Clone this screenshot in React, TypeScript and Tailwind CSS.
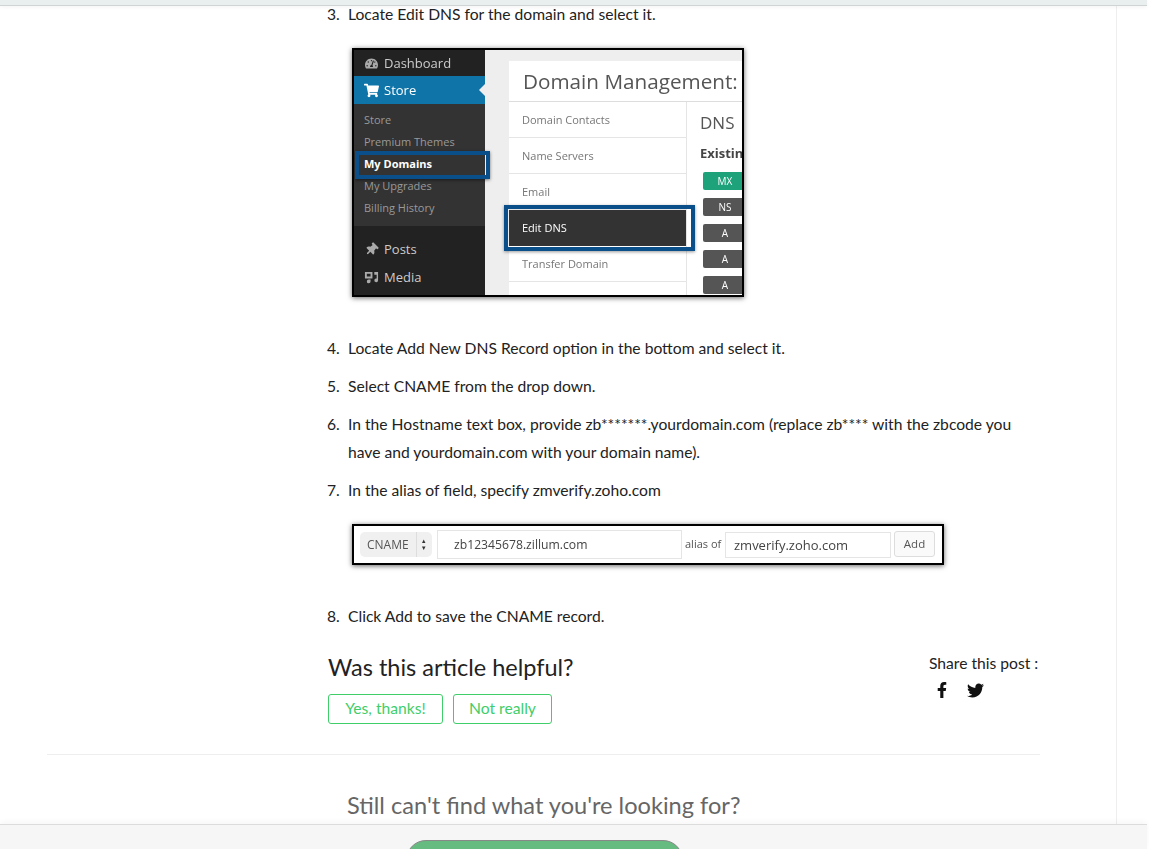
import { FaFacebookF, FaTwitter, FaShoppingCart, FaThumbtack, FaTachometerAlt } from "react-icons/fa"

const ui = "font-['Open_Sans',sans-serif]"

function Step({ n, children }: { n: number; children: React.ReactNode }) {
  return (
    <li className="flex leading-[28px] mb-[10px]">
      <span className="w-[21px] shrink-0">{n}.</span>
      <div className="min-w-0 flex-1">{children}</div>
    </li>
  )
}

function SubItem({ label, strong }: { label: string; strong?: boolean }) {
  return (
    <div className={`h-[22px] leading-[22px] pl-[10px] text-[11px] ${strong ? "font-bold text-white" : "text-[#999]"}`}>
      {label}
    </div>
  )
}

function MenuRow({ icon, label, active, short }: { icon: React.ReactNode; label: string; active?: boolean; short?: boolean }) {
  return (
    <div className={`${short ? "h-[26px]" : "h-[28px]"} flex items-center text-[13px] relative ${active ? "bg-[#0f74a8] text-white" : "text-[#ccc]"}`}>
      <span className="w-[30px] flex justify-center pl-[4px] text-[#aaa]">{icon}</span>
      {label}
      {active && (
        <span className="absolute right-0 top-[8px] border-y-[6px] border-r-[6px] border-y-transparent border-r-[#eee]" />
      )}
    </div>
  )
}

function DomainRow({ label, selected }: { label: string; selected?: boolean }) {
  return (
    <div
      className={`h-[36px] flex items-center pl-[13px] text-[11px] border-b ${
        selected ? "bg-[#333] text-white border-[#333]" : "text-[#777] border-[#e5e5e5]"
      }`}
    >
      {label}
    </div>
  )
}

function Badge({ label, green }: { label: string; green?: boolean }) {
  return (
    <div
      className={`h-[18px] w-[44px] rounded-[2px] flex items-center justify-center text-[10px] text-white ${
        green ? "bg-[#1ea27a]" : "bg-[#555]"
      }`}
    >
      {label}
    </div>
  )
}

function DomainShot() {
  return (
    <div className={`${ui} relative ml-[4px] mt-[20px] mb-[27px] w-[392px] h-[249px] border-2 border-black shadow-[0_1px_5px_rgba(0,0,0,0.6)] overflow-hidden flex`}>
      <div className="w-[131px] shrink-0 bg-[#222] blur-[0.5px]">
        <MenuRow icon={<FaTachometerAlt size={13} />} label="Dashboard" short />
        <MenuRow icon={<FaShoppingCart size={15} className="text-white" />} label="Store" active />
        <div className="bg-[#333] pt-[5px] pb-[6px] h-[122px]">
          <SubItem label="Store" />
          <SubItem label="Premium Themes" />
          <SubItem label="My Domains" strong />
          <SubItem label="My Upgrades" />
          <SubItem label="Billing History" />
        </div>
        <div className="pt-[9px]">
          <MenuRow icon={<FaThumbtack size={13} className="rotate-45" />} label="Posts" />
          <MenuRow
            icon={
              <svg width="15" height="15" viewBox="0 0 16 16" fill="currentColor">
                <path d="M1 2h8v7H1zM3 4v3h4V4zM11 2h4v9a2 2 0 1 1-1.500-1.900V5H11zM5 10h2v2a2 2 0 1 1-2-1.900z" fillRule="evenodd" />
              </svg>
            }
            label="Media"
          />
        </div>
      </div>
      <div className="flex-1 bg-[#eee] pl-[24px] pt-[11px] min-w-0">
        <div className="w-[300px] h-full bg-white blur-[0.4px]">
          <div className="h-[41px] flex items-center pl-[14px] text-[20.700px] whitespace-nowrap text-[#555] border-b border-[#ddd]">
            Domain Management: s
          </div>
          <div className="flex">
            <div className="w-[178px] shrink-0 border-r border-[#e5e5e5] h-[200px]">
              <DomainRow label="Domain Contacts" />
              <DomainRow label="Name Servers" />
              <DomainRow label="Email" />
              <DomainRow label="Edit DNS" selected />
              <DomainRow label="Transfer Domain" />
            </div>
            <div className="pl-[13px] pt-[9px] min-w-0">
              <div className="text-[17px] leading-[24px] text-[#555]">DNS</div>
              <div className="text-[13px] leading-[18px] mt-[9px] font-bold text-[#444]">Existing</div>
              <div className="mt-[10px] ml-[3px] flex flex-col gap-[8px]">
                <Badge label="MX" green />
                <Badge label="NS" />
                <Badge label="A" />
                <Badge label="A" />
                <Badge label="A" />
              </div>
            </div>
          </div>
        </div>
      </div>
      <div className="absolute left-[1px] top-[101px] w-[135px] h-[28px] border-[4px] border-[#0b4f8a] shadow-[0_1px_3px_rgba(0,0,0,0.5)]" />
      <div className="absolute left-[150px] top-[155px] w-[191px] h-[46px] border-[4px] border-[#0b4f8a] shadow-[0_1px_3px_rgba(0,0,0,0.4)]" />
    </div>
  )
}

function CnameShot() {
  return (
    <div className={`${ui} ml-[4px] mt-[20px] mb-[27px] w-[592px] h-[41px] border-2 border-black shadow-[0_1px_5px_rgba(0,0,0,0.6)] bg-white flex items-center pl-[6px] text-[12px] text-[#555]`}>
      <div className="w-[72px] h-[25px] bg-[#f0f0f0] rounded-[5px] flex items-center pl-[7px] blur-[0.3px]">
        CNAME
        <span className="ml-[7px] pl-[4px] h-full border-l border-[#ddd] flex flex-col justify-center text-[6px] leading-[7px] text-[#333]">
          <span>▲</span>
          <span>▼</span>
        </span>
      </div>
      <div className="ml-[5px] w-[245px] h-[29px] border border-[#e5e5e5] flex items-center pl-[16px] text-[12.200px] text-[#444] blur-[0.3px]">zb12345678.zillum.com</div>
      <span className="ml-[3px] w-[40px] text-[11px] whitespace-nowrap -mt-[2px] blur-[0.3px]">alias of</span>
      <div className="w-[166px] h-[26px] border border-[#e5e5e5] flex items-center pl-[8px] text-[13px] text-[#444] blur-[0.3px]">zmverify.zoho.com</div>
      <div className="ml-[3px] w-[41px] h-[26px] border border-[#ddd] rounded-[3px] bg-[#fafafa] flex items-center justify-center text-[11.500px] -mt-[2px] blur-[0.3px]">Add</div>
    </div>
  )
}

export default function App() {
  return (
    <div className="h-[849px] overflow-hidden flex flex-col bg-white font-['Lato',sans-serif] text-[15.650px] text-[#222]">
      <div className="h-[6px] w-[1147px] shrink-0 bg-[#e9eeee] border-b border-[#d0d4d4] shadow-[0_1px_4px_rgba(0,0,0,0.05)] relative z-10" />

      <div className="flex-1 min-h-0 w-[1117px] border-r border-[#eeeeee] overflow-hidden">
        <div className="w-[1040px] pl-[47px] -mt-[6px]">
          <ol className="pl-[280px] pr-[28px]">
            <Step n={3}>
              Locate Edit DNS for the domain and select it.
              <DomainShot />
            </Step>
            <Step n={4}>Locate Add New DNS Record option in the bottom and select it.</Step>
            <Step n={5}>Select CNAME from the drop down.</Step>
            <Step n={6}>
              In the Hostname text box, provide zb*******.yourdomain.com (replace zb**** with the zbcode you have and
              yourdomain.com with your domain name).
            </Step>
            <Step n={7}>
              In the alias of field, specify zmverify.zoho.com
              <CnameShot />
            </Step>
            <Step n={8}>Click Add to save the CNAME record.</Step>
          </ol>

          <div className="ml-[281px] mt-[21px] flex justify-between">
            <div>
              <h2 className="text-[23.500px] leading-[32px]">Was this article helpful?</h2>
              <div className="mt-[11px] flex gap-[10px] text-[#3fce6a]">
                <button className="w-[115px] h-[30px] border border-[#3fce6a] rounded-[3px]">Yes, thanks!</button>
                <button className="w-[99px] h-[30px] border border-[#3fce6a] rounded-[3px]">Not really</button>
              </div>
            </div>
            <div className="w-[111px] whitespace-nowrap mt-[1px]">
              <div className="leading-[22px]">Share this post :</div>
              <div className="flex gap-[17px] mt-[8px] pl-[5px] text-[#111]">
                <FaFacebookF size={16} />
                <FaTwitter size={17} />
              </div>
            </div>
          </div>

          <div className="mt-[30px] border-t border-[#eee]" />
          <div className="mt-[34px] pl-[300px] text-[23.600px] leading-[32px] text-[#666]">Still can't find what you're looking for?</div>
        </div>
      </div>

      <div className="h-[25px] w-[1147px] shrink-0 bg-[#f6f6f6] border-t border-[#dcdcdc] shadow-[0_-2px_6px_rgba(0,0,0,0.04)] relative z-10 overflow-hidden">
        <div className="ml-[406px] mt-[15px] w-[277px] h-[30px] bg-[#66bb80] border border-[#888] rounded-t-[20px]" />
      </div>
    </div>
  )
}
